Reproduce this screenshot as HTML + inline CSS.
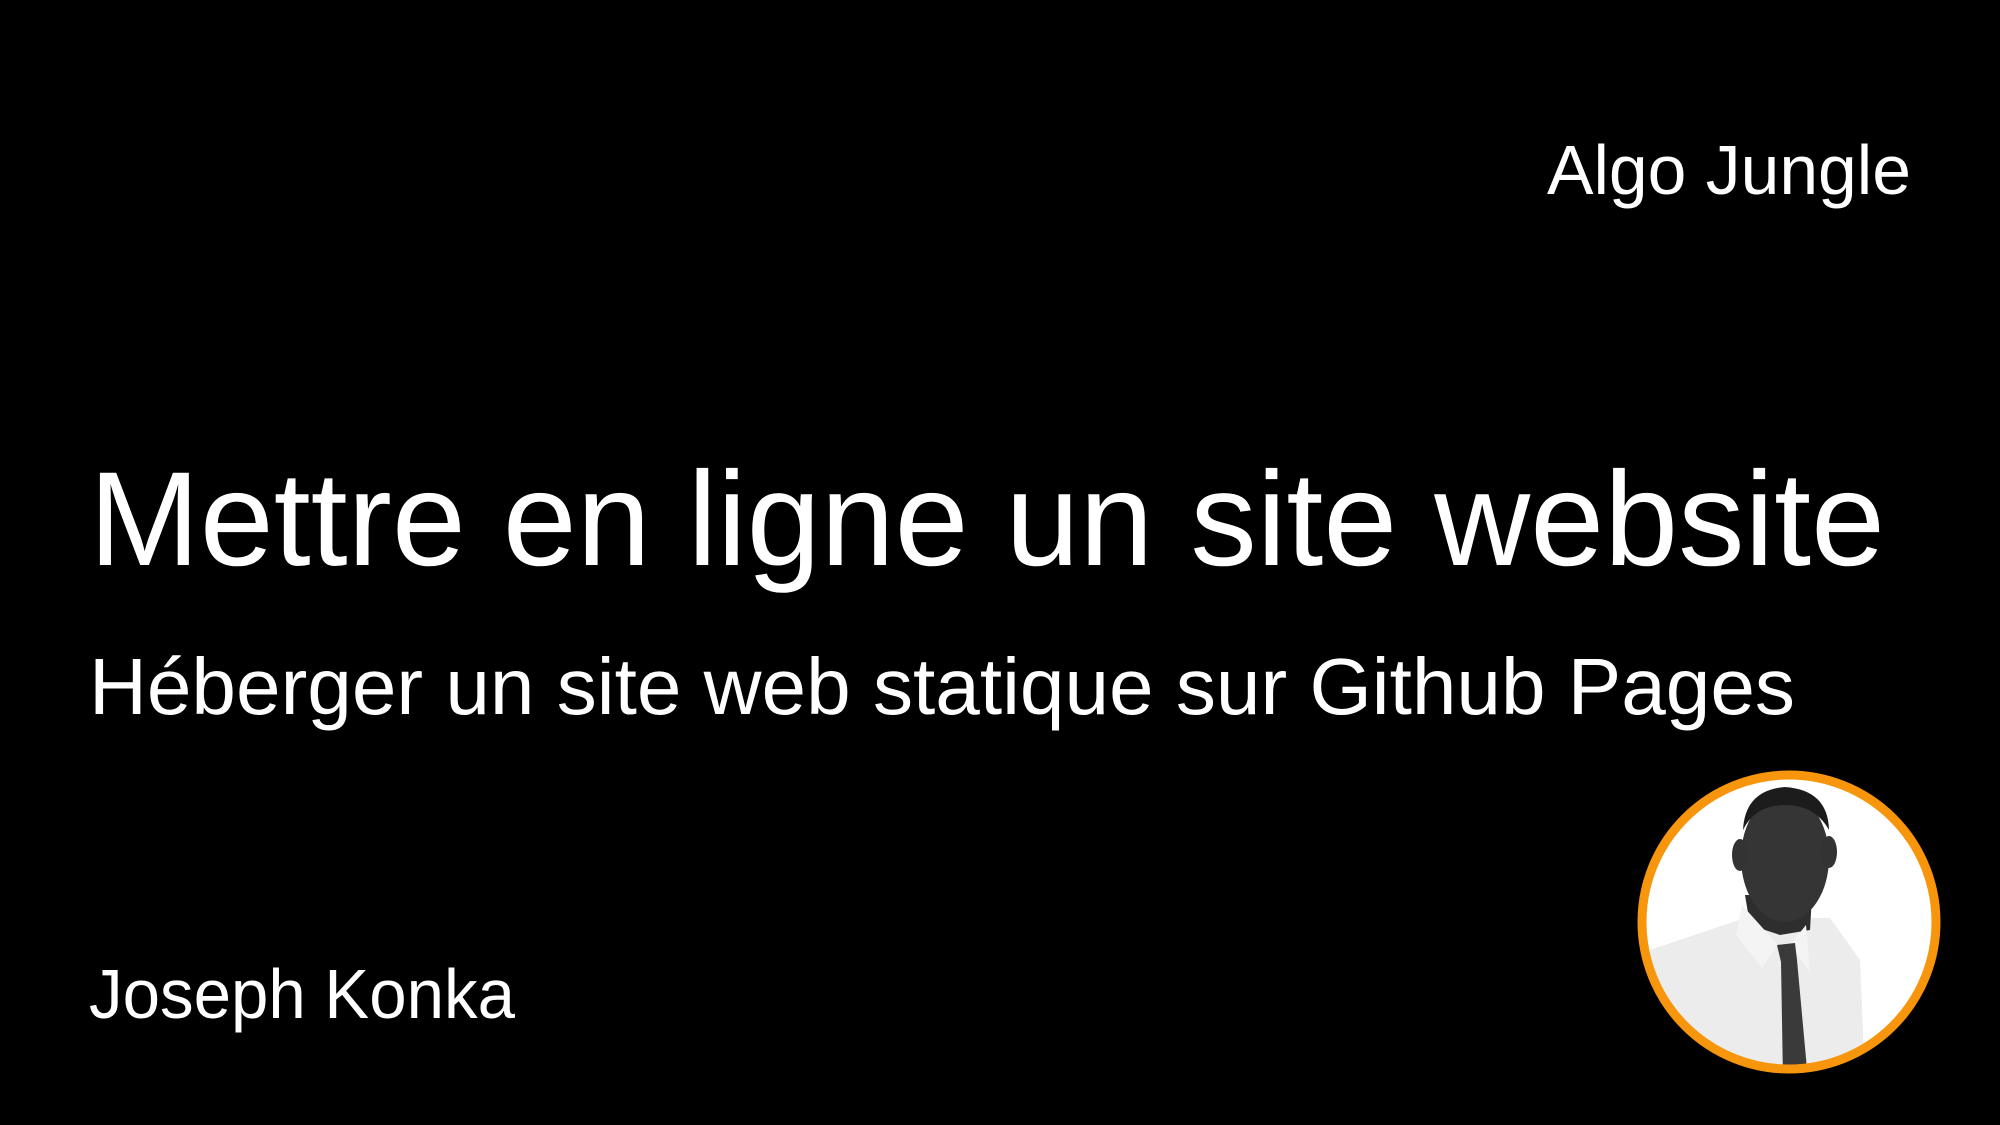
<!DOCTYPE html>
<html><head><meta charset="utf-8"><style>
html,body{margin:0;padding:0;background:#000;width:2000px;height:1125px;overflow:hidden}
svg{display:block}
text{font-family:"Liberation Sans",sans-serif;fill:#fff}
</style></head><body>
<svg width="2000" height="1125" viewBox="0 0 2000 1125">
<rect width="2000" height="1125" fill="#000"/>
<text x="1547" y="194" font-size="70" textLength="364" lengthAdjust="spacingAndGlyphs">Algo Jungle</text>
<text x="89" y="565" font-size="134" textLength="1796" lengthAdjust="spacingAndGlyphs">Mettre en ligne un site website</text>
<text x="89" y="714" font-size="80" textLength="1706" lengthAdjust="spacingAndGlyphs">Héberger un site web statique sur Github Pages</text>
<text x="89" y="1018" font-size="70" textLength="426" lengthAdjust="spacingAndGlyphs">Joseph Konka</text>
<defs><clipPath id="c"><circle cx="1789" cy="922" r="143"/></clipPath></defs>
<circle cx="1789" cy="922" r="147" fill="#fff"/>
<g clip-path="url(#c)">
<rect x="1640" y="770" width="300" height="310" fill="#fff"/>
<!-- shirt -->
<path d="M1650 950 L1745 918 L1830 918 L1860 960 L1865 1080 L1650 1080 Z" fill="#ececec"/>
<!-- neck -->
<path d="M1745 895 L1812 895 L1810 930 L1780 935 L1750 925 Z" fill="#2e2e2e"/>
<!-- head -->
<ellipse cx="1785" cy="858" rx="44" ry="64" fill="#353535"/>
<ellipse cx="1740" cy="855" rx="8" ry="16" fill="#333"/>
<ellipse cx="1829" cy="852" rx="8" ry="16" fill="#333"/>
<path d="M1743 830 Q1745 790 1785 787 Q1828 790 1829 830 Q1815 805 1785 805 Q1755 805 1743 830Z" fill="#1c1c1c"/>
<!-- collar -->
<path d="M1742 905 L1778 945 L1762 968 L1736 935 Z" fill="#f4f4f4"/>
<path d="M1806 925 L1808 948 L1810 972 L1790 945 Z" fill="#f4f4f4"/>
<!-- tie -->
<path d="M1777 945 L1795 943 L1797 960 L1808 1080 L1783 1080 L1781 962 Z" fill="#3a3a3a"/>
</g>
<circle cx="1789" cy="922" r="147" fill="none" stroke="#f7960c" stroke-width="9"/>
</svg>
</body></html>
